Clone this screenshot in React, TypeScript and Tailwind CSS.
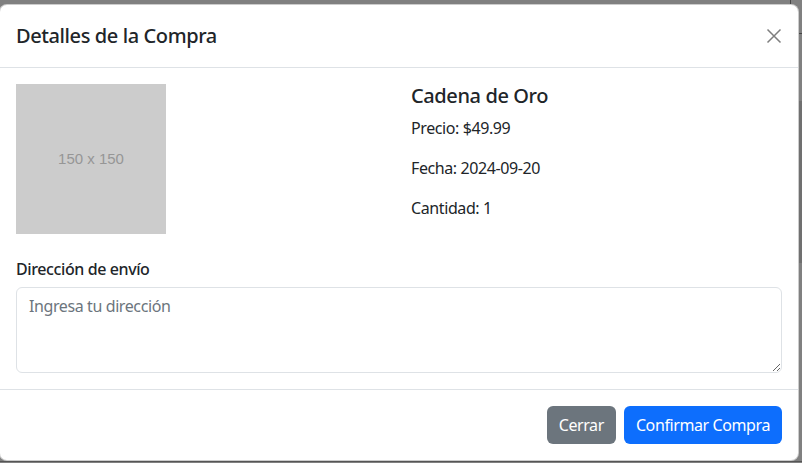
import { useState } from 'react'

function CloseIcon() {
  return (
    <svg viewBox="0 0 16 16" className="w-4 h-4" fill="none" stroke="currentColor" strokeWidth={1.5}>
      <path d="M1.5 1.5 14.5 14.5M14.5 1.5 1.5 14.5" />
    </svg>
  )
}

export default function App() {
  const [address, setAddress] = useState('')

  return (
    <div
      className="relative w-[802px] h-[463px] overflow-hidden bg-[#808080] text-[#212529] tracking-[-0.025em]"
      style={{ fontFamily: '"Segoe UI", "Noto Sans", "Liberation Sans", sans-serif' }}
    >
      {/* página de fondo (atenuada) */}
      <div className="absolute left-[136px] top-[-48px] text-[40px] font-bold text-[#1a1a1a] opacity-60">Cadena de Oro</div>
      <div className="absolute left-[790px] top-0 h-[5px] w-px bg-[#444]" />
      <div className="absolute left-[798px] top-[33px] w-[4px] h-px bg-[#444]" />
      <div className="absolute left-[798px] top-[101px] w-[4px] h-[162px] bg-[#707070]" />
      <div className="absolute left-0 top-[461px] w-full h-px bg-[#555]" />

      {/* modal */}
      <div className="absolute left-[-1px] top-[4px] w-[800px] bg-white border border-black/20 rounded-lg">
        <div className="flex items-center justify-between p-4 border-b border-[#dee2e6]">
          <h5 className="text-[20px] leading-[30px] font-medium">Detalles de la Compra</h5>
          <button className="p-1 -mr-1 text-black opacity-50">
            <CloseIcon />
          </button>
        </div>

        <div className="p-4">
          <div className="grid grid-cols-2 gap-6">
            <div>
              <div
                className="w-[150px] h-[150px] bg-[#cccccc] flex items-center justify-center text-[15px] tracking-normal text-[#969696]"
                style={{ fontFamily: '"Liberation Sans", Arial, sans-serif' }}
              >
                150 x 150
              </div>
            </div>
            <div>
              <h5 className="text-[20px] leading-6 font-medium mb-2">Cadena de Oro</h5>
              <p className="text-base leading-6 mb-4">Precio: $49.99</p>
              <p className="text-base leading-6 mb-4">Fecha: 2024-09-20</p>
              <p className="text-base leading-6 mb-4">Cantidad: 1</p>
            </div>
          </div>

          <div className="mt-[21px]">
            <label className="block text-base leading-6 font-medium mb-[6px]">Dirección de envío</label>
            <textarea
              rows={3}
              value={address}
              onChange={e => setAddress(e.target.value)}
              placeholder="Ingresa tu dirección"
              className="block w-full h-[86px] px-3 py-1.5 text-base leading-6 border border-[#dee2e6] rounded-md placeholder-[#6c757d] focus:outline-none"
            />
          </div>
        </div>

        <div className="flex justify-end items-center gap-2 px-4 py-4 border-t border-[#dee2e6]">
          <button className="h-[38px] px-3 rounded-md bg-[#6c757d] text-white text-base">Cerrar</button>
          <button className="h-[38px] px-3 rounded-md bg-[#0d6efd] text-white text-base">Confirmar Compra</button>
        </div>
      </div>
    </div>
  )
}
